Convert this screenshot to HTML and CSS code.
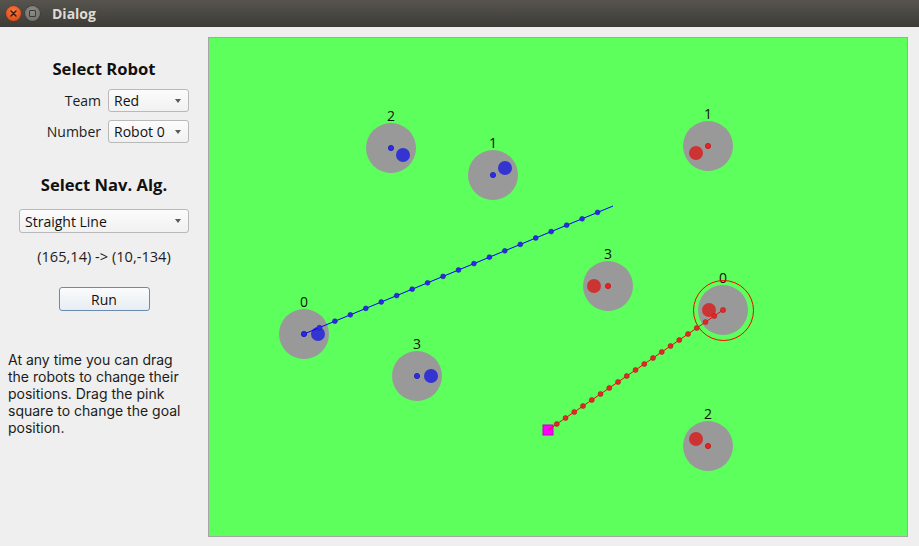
FILE: index.html
```html
<!DOCTYPE html>
<html>
<head>
<meta charset="utf-8">
<title>Dialog</title>
<link rel="stylesheet" href="styles.css">
</head>
<body>
<div class="window">
  <div class="titlebar">
    <span class="tb-btn tb-close">
      <svg width="15" height="15" viewBox="0 0 15 15"><path d="M5 5 L10 10 M10 5 L5 10" stroke="#3b1608" stroke-width="1.4" stroke-linecap="round"/></svg>
    </span>
    <span class="tb-btn tb-max"><span class="tb-square"></span></span>
    <span class="tb-title">Dialog</span>
  </div>
  <div class="main">
    <div class="panel">
      <h2 class="heading heading-robot">Select Robot</h2>
      <div class="form">
        <span class="form-label">Team</span>
        <div class="combo combo-small"><span>Red</span><span class="arrow"></span></div>
        <span class="form-label">Number</span>
        <div class="combo combo-small"><span>Robot 0</span><span class="arrow"></span></div>
      </div>
      <h2 class="heading heading-nav">Select Nav. Alg.</h2>
      <div class="combo combo-wide"><span>Straight Line</span><span class="arrow"></span></div>
      <div class="coords">(165,14) -&gt; (10,-134)</div>
      <button class="run">Run</button>
      <p class="help">At any time you can drag<br>the robots to change their<br>positions. Drag the pink<br>square to change the goal<br>position.</p>
    </div>
    <div class="canvas">
      <svg class="field" width="698" height="498" viewBox="209 38 698 498">
        <rect x="209" y="38" width="698" height="498" fill="#5cff5c"/>
        <g class="robots">
          <!-- blue team -->
          <circle cx="391" cy="148" r="25" fill="#999999"/>
          <circle cx="403" cy="155" r="7" fill="#3434d0"/>
          <circle cx="391" cy="148" r="2.6" fill="#2c2cf0" stroke="#1a1aa8" stroke-width="0.8"/>
          <text x="391" y="121" class="lbl">2</text>

          <circle cx="493" cy="175" r="25" fill="#999999"/>
          <circle cx="505" cy="168" r="7" fill="#3434d0"/>
          <circle cx="493" cy="175" r="2.6" fill="#2c2cf0" stroke="#1a1aa8" stroke-width="0.8"/>
          <text x="493" y="148" class="lbl">1</text>

          <circle cx="304" cy="334" r="25" fill="#999999"/>
          <circle cx="318" cy="334" r="7" fill="#3434d0"/>
          <circle cx="304" cy="334" r="2.6" fill="#2c2cf0" stroke="#1a1aa8" stroke-width="0.8"/>
          <text x="304" y="307" class="lbl">0</text>

          <circle cx="417" cy="376" r="25" fill="#999999"/>
          <circle cx="431" cy="376" r="7" fill="#3434d0"/>
          <circle cx="417" cy="376" r="2.6" fill="#2c2cf0" stroke="#1a1aa8" stroke-width="0.8"/>
          <text x="417" y="349" class="lbl">3</text>

          <!-- red team -->
          <circle cx="708" cy="146" r="25" fill="#999999"/>
          <circle cx="696" cy="153" r="7" fill="#cc3434"/>
          <circle cx="708" cy="146" r="2.6" fill="#f02020" stroke="#b01818" stroke-width="0.8"/>
          <text x="708" y="119" class="lbl">1</text>

          <circle cx="608" cy="286" r="25" fill="#999999"/>
          <circle cx="594" cy="286" r="7" fill="#cc3434"/>
          <circle cx="608" cy="286" r="2.6" fill="#f02020" stroke="#b01818" stroke-width="0.8"/>
          <text x="608" y="259" class="lbl">3</text>

          <circle cx="723" cy="310" r="25" fill="#999999"/>
          <circle cx="709" cy="310" r="7" fill="#cc3434"/>
          <text x="723" y="283" class="lbl">0</text>

          <circle cx="708" cy="446" r="25" fill="#999999"/>
          <circle cx="696" cy="439" r="7" fill="#cc3434"/>
          <circle cx="708" cy="446" r="2.6" fill="#f02020" stroke="#b01818" stroke-width="0.8"/>
          <text x="708" y="419" class="lbl">2</text>
        </g>

        <!-- selected ring -->
        <circle cx="723.5" cy="310.5" r="30" fill="none" stroke="#ff0000" stroke-width="1"/>

        <!-- goal square -->
        <rect x="543" y="425" width="10" height="10" fill="#ff00ff" stroke="#c000c0" stroke-width="1"/>

        <!-- blue path -->
        <line x1="304" y1="334" x2="613" y2="206" stroke="#0000ff" stroke-width="1"/>
        <g fill="#2a2ae6" stroke="#1a1ab0" stroke-width="0.6">
          <circle cx="304" cy="334" r="2.4"/>
          <circle cx="319.45" cy="327.6" r="2.4"/>
          <circle cx="334.9" cy="321.2" r="2.4"/>
          <circle cx="350.35" cy="314.8" r="2.4"/>
          <circle cx="365.8" cy="308.4" r="2.4"/>
          <circle cx="381.25" cy="302" r="2.4"/>
          <circle cx="396.7" cy="295.6" r="2.4"/>
          <circle cx="412.15" cy="289.2" r="2.4"/>
          <circle cx="427.6" cy="282.8" r="2.4"/>
          <circle cx="443.05" cy="276.4" r="2.4"/>
          <circle cx="458.5" cy="270" r="2.4"/>
          <circle cx="473.95" cy="263.6" r="2.4"/>
          <circle cx="489.4" cy="257.2" r="2.4"/>
          <circle cx="504.85" cy="250.8" r="2.4"/>
          <circle cx="520.3" cy="244.4" r="2.4"/>
          <circle cx="535.75" cy="238" r="2.4"/>
          <circle cx="551.2" cy="231.6" r="2.4"/>
          <circle cx="566.65" cy="225.2" r="2.4"/>
          <circle cx="582.1" cy="218.8" r="2.4"/>
          <circle cx="597.55" cy="212.4" r="2.4"/>
        </g>

        <!-- red path -->
        <line x1="723" y1="310" x2="548" y2="430" stroke="#ff0000" stroke-width="1"/>
        <g fill="#e02828" stroke="#b81c1c" stroke-width="0.6">
          <circle cx="723" cy="310" r="2.6"/>
          <circle cx="714.25" cy="316" r="2.5"/>
          <circle cx="705.5" cy="322" r="2.5"/>
          <circle cx="696.75" cy="328" r="2.5"/>
          <circle cx="688" cy="334" r="2.5"/>
          <circle cx="679.25" cy="340" r="2.5"/>
          <circle cx="670.5" cy="346" r="2.5"/>
          <circle cx="661.75" cy="352" r="2.5"/>
          <circle cx="653" cy="358" r="2.5"/>
          <circle cx="644.25" cy="364" r="2.5"/>
          <circle cx="635.5" cy="370" r="2.5"/>
          <circle cx="626.75" cy="376" r="2.5"/>
          <circle cx="618" cy="382" r="2.5"/>
          <circle cx="609.25" cy="388" r="2.5"/>
          <circle cx="600.5" cy="394" r="2.5"/>
          <circle cx="591.75" cy="400" r="2.5"/>
          <circle cx="583" cy="406" r="2.5"/>
          <circle cx="574.25" cy="412" r="2.5"/>
          <circle cx="565.5" cy="418" r="2.5"/>
          <circle cx="556.75" cy="424" r="2.5"/>
        </g>
      </svg>
    </div>
  </div>
</div>
</body>
</html>
```

FILE: styles.css
```css
* { box-sizing: border-box; }

html, body {
  margin: 0;
  padding: 0;
  background: #efefef;
}

body {
  width: 919px;
  height: 546px;
  overflow: hidden;
  font-family: "Open Sans", "Lato", sans-serif;
  font-size: 14px;
  color: #1c1c1c;
}

.window {
  display: flex;
  flex-direction: column;
  height: 546px;
}

/* ---------- title bar ---------- */
.titlebar {
  height: 27px;
  flex: none;
  display: flex;
  align-items: center;
  padding-left: 6px;
  background: linear-gradient(#57544e, #3c3b37);
}

.tb-btn {
  width: 15px;
  height: 15px;
  border-radius: 50%;
  display: flex;
  align-items: center;
  justify-content: center;
  flex: none;
}

.tb-close {
  background: radial-gradient(circle at 50% 35%, #f67a48, #e2521c 70%, #c9430f);
  box-shadow: 0 0 0 0.5px #8c2e0a;
}

.tb-max {
  margin-left: 4px;
  background: radial-gradient(circle at 50% 35%, #8f8d87, #75736e 75%, #5e5c57);
  box-shadow: 0 0 0 0.5px #33322e;
}

.tb-square {
  width: 7px;
  height: 7px;
  border: 1.3px solid #3a3935;
  border-radius: 1px;
}

.tb-title {
  margin-left: 12px;
  font-weight: 700;
  font-size: 14px;
  color: #dfdbd2;
  line-height: 27px;
}

/* ---------- main area ---------- */
.main {
  flex: 1;
  display: flex;
  align-items: flex-start;
}

.panel {
  width: 208px;
  flex: none;
  display: flex;
  flex-direction: column;
  align-items: center;
  padding-top: 32px;
}

.heading {
  margin: 0;
  font-size: 16.6px;
  font-weight: 700;
  line-height: 20px;
  color: #111;
}

.form {
  margin-top: 10px;
  align-self: flex-start;
  display: grid;
  grid-template-columns: 101px 81px;
  column-gap: 7px;
  row-gap: 8px;
}

.form-label {
  text-align: right;
  line-height: 23px;
}

.combo {
  position: relative;
  height: 23px;
  border: 1px solid #b9b9b9;
  border-radius: 3px;
  background: linear-gradient(#fcfcfc, #f1f1f1);
  padding-left: 5px;
  display: flex;
  align-items: center;
  color: #111;
}

.combo-wide {
  width: 170px;
  height: 24px;
  margin-top: 14px;
}

.arrow {
  position: absolute;
  right: 7px;
  top: 50%;
  margin-top: -2px;
  width: 0;
  height: 0;
  border-left: 3.5px solid transparent;
  border-right: 3.5px solid transparent;
  border-top: 4px solid #5a5a5a;
}

.heading-nav {
  margin-top: 32px;
}

.coords {
  margin-top: 15px;
  font-size: 14.6px;
  line-height: 17px;
}

.run {
  margin-top: 22px;
  width: 91px;
  height: 24px;
  border: 1px solid #6a8bb0;
  border-radius: 3px;
  background: linear-gradient(#fafbfd, #e8edf2);
  font-family: inherit;
  font-size: 14px;
  color: #111;
  padding: 0;
}

.help {
  align-self: stretch;
  margin: 40px 0 0 0;
  padding-left: 8px;
  font-family: "Inter", "Lato", sans-serif;
  font-size: 14px;
  line-height: 17px;
  white-space: nowrap;
}

/* ---------- canvas ---------- */
.canvas {
  margin-top: 10px;
  width: 700px;
  height: 500px;
  flex: none;
  border: 1px solid #a5a5a5;
}

.field {
  display: block;
}

.lbl {
  font-family: "Open Sans", "Lato", sans-serif;
  font-size: 14px;
  fill: #111;
  text-anchor: middle;
}
```
